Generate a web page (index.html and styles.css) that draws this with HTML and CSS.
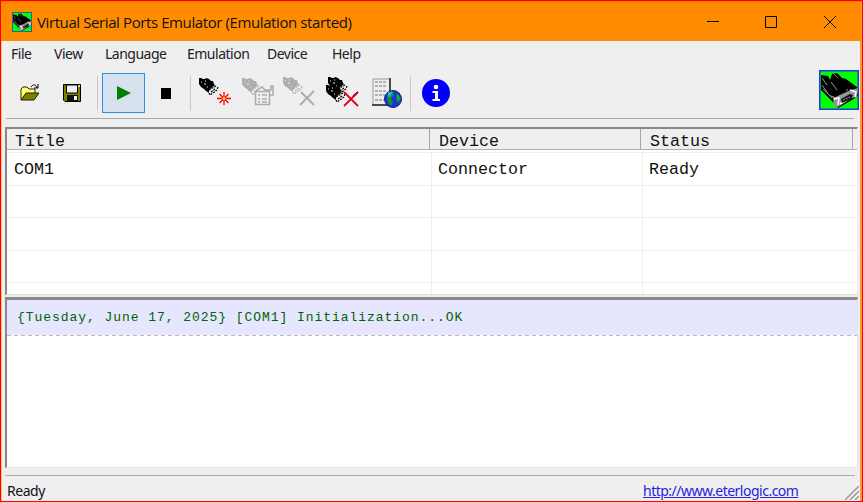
FILE: index.html
```
<!DOCTYPE html>
<html lang="en">
<head>
<meta charset="utf-8">
<title>Virtual Serial Ports Emulator</title>
<link rel="stylesheet" href="styles.css">
</head>
<body>
<svg class="defs" width="0" height="0" aria-hidden="true">
  <symbol id="plug" viewBox="0 0 20 18">
    <path fill="currentColor" d="M0 0h2l2 1h2l1-1 3 1 2 2h2l1 3 2 2 1 2-8 5-3-2-2-2-3-2-2-3z"/>
    <path fill="none" stroke="#efefef" d="M2 4h1M5 6h2M6 3h1M8 9h1"/>
    <path fill="#efefef" d="M10 12l6-5 3 2-1 3-6 5-2-1z"/>
    <path fill="none" stroke="currentColor" stroke-width="1.200" stroke-dasharray="2 1" d="M10 12l7-4M10 15l1 2 7-5 1-3M12 14l4-3"/>
  </symbol>
  <symbol id="connector" viewBox="0 0 40 40">
    <rect x=".75" y=".75" width="38.5" height="38.5" fill="#0f0" stroke="#2438df" stroke-width="1.5"/>
    <path d="M2 5l7 1 2 4 2-6 5-1 5 5 4 1 11 8 1 9-6 4-14 8-5-6L2 20z" fill="#000"/>
    <path d="M3 15l7 10 6 3M3 8l5 7M12 12l6 8" fill="none" stroke="#999" stroke-width="1"/>
    <path d="M15 4l4 4M4 19l9 9" fill="none" stroke="#888" stroke-width="1"/>
    <path d="M14 28l18-8 7-2-1 9-5 1-14 9-4-1z" fill="#969696"/>
    <path d="M15 29l5-1-1 7M31 20l6 2-1 5M21 34l7-4" fill="none" stroke="#fff" stroke-width="1.500"/>
    <path d="M22 29l9-5 3 1-2 4-9 4z" fill="#111"/>
    <path d="M24 30l7-3" stroke="#aaa" stroke-dasharray="2 1"/>
    <path d="M13 27h2M27 20h2" stroke="#bd9827"/>
  </symbol>
</svg>
<div class="window">
  <header class="titlebar">
    <svg class="app-icon" viewBox="0 0 40 40"><use href="#connector"/></svg>
    <span class="caption">Virtual Serial Ports Emulator (Emulation started)</span>
    <svg class="win-buttons" width="130" height="14" viewBox="0 0 130 14" fill="none" stroke="#000">
      <path d="M0 6.5h12M58.5 1.5h11v11h-11zM117 1l12 12M129 1l-12 12"/>
    </svg>
  </header>
  <nav class="menu">
    <span class="m-file">File</span><span class="m-view">View</span><span class="m-lang">Language</span><span class="m-emu">Emulation</span><span class="m-dev">Device</span><span class="m-help">Help</span>
  </nav>
  <div class="toolbar">
    <div class="tool open"><svg width="20" height="18" viewBox="0 0 20 18">
      <path d="M1 16V5l2-2h4l2 2h6v4" fill="#ffff70" stroke="#282800"/>
      <path d="M1 16l5-7h13l-5 7z" fill="#808000" stroke="#222200"/>
      <path d="M11 3c2-3 5-3 6 1M14 4h4V0" fill="none" stroke="#000"/>
    </svg></div>
    <div class="tool save"><svg width="18" height="18" viewBox="0 0 18 18">
      <path d="M.5.5h17v17H2l-1.500-1.500z" fill="#808000" stroke="#000"/>
      <path d="M3.500 1h11v8h-11z" fill="#efefef" stroke="#000"/><path d="M4 11h11v6H4z" fill="#111"/><path d="M11 12h3v4h-3z" fill="#efefef"/><path d="M15 1h2v2h-2z" fill="#ddd"/>
    </svg></div>
    <i class="sep first"></i>
    <div class="tool play"><svg width="14" height="14" viewBox="0 0 14 14"><path d="M0 0l14 7-14 7z" fill="#008000"/></svg></div>
    <div class="tool stop"><svg width="10" height="11"><path d="M0 0h10v11H0z"/></svg></div>
    <i class="sep second"></i>
    <svg class="tool-icon" viewBox="0 0 36 32">
      <use href="#plug" x="1" y="1" width="20" height="18"/>
      <path d="M26 15v13M19 21.500h14M21.500 17l9 9M30.500 17l-9 9" stroke="#f00" stroke-width="1.300"/><circle cx="26" cy="21.500" r="1.500" fill="#ffe600"/>
    </svg>
    <svg class="tool-icon props" viewBox="0 0 36 32">
      <use href="#plug" x="1" y="1" width="20" height="18"/>
      <path d="M14.500 14.500h14v13h-14zM17 18h2m2 0h5m-9 4h2m2 0h5m-9 3h2m2 0h5M15 14l6-4 3 3h6v-4h2v9h-3" fill="#efefef" stroke="#adadad" stroke-width="1.500"/>
    </svg>
    <svg class="tool-icon remove" viewBox="0 0 36 32">
      <use href="#plug" x="1" y="0" width="20" height="18"/>
      <path d="M19 15l13 13M32 14L18 28" stroke="#adadad" stroke-width="2"/>
    </svg>
    <svg class="tool-icon remove-all" viewBox="0 0 36 32">
      <use href="#plug" x="2" y="0" width="20" height="18"/><use href="#plug" x="0" y="8" width="20" height="18"/>
      <path d="M18 15l14 14M32 15L18 29" stroke="#e90018" stroke-width="1.800"/><path d="M27 19l5-4" stroke="#880080" stroke-width="1.500"/>
    </svg>
    <svg class="tool-icon web" viewBox="0 0 36 32">
      <path d="M3 2h17v26H3z" fill="#eee" stroke="#999"/><path d="M20 1v24M2 28h17" stroke="#222" stroke-width="1.500"/>
      <path d="M5 5h12M5 9h12M5 14h12M5 18h10M5 23h9" stroke="#777" stroke-dasharray="3 1"/>
      <circle cx="23" cy="22" r="8.500" fill="#1734d5" stroke="#141b8e"/><path d="M18 16l5-2 1 4-3 4 2 3-2 4-3-3-1-5zM27 16l4 5-2 5-3-3z" fill="#198c37"/><path d="M18 16l4-1-3 5zM27 18l2 4" fill="#28bfca" stroke="#28bfca"/>
    </svg>
    <i class="sep third"></i>
    <svg class="info" width="28" height="28" viewBox="0 0 28 28"><circle cx="14" cy="14" r="14" fill="#0000fb"/><circle cx="14" cy="8" r="2.300" fill="#fff"/><path d="M10.500 12H16v8h2v2h-7.500v-2H13v-6h-2.500z" fill="#fff"/></svg>
    <svg class="logo" viewBox="0 0 40 40"><use href="#connector"/></svg>
  </div>
  <main class="ports">
    <div class="row head"><span>Title</span><span>Device</span><span>Status</span><span></span></div>
    <div class="row"><span>COM1</span><span>Connector</span><span>Ready</span></div>
    <div class="row"><span></span><span></span><span></span></div>
    <div class="row"><span></span><span></span><span></span></div>
    <div class="row"><span></span><span></span><span></span></div>
    <div class="row last"><span></span><span></span><span></span></div>
  </main>
  <section class="log"><div class="entry">{Tuesday, June 17, 2025} [COM1] Initialization...OK</div></section>
  <footer class="status"><span class="ready">Ready</span><span class="link">http://www.eterlogic.com</span>
    <svg class="grip" width="14" height="14" viewBox="0 0 14 14" stroke="#999" stroke-width="1.500"><path d="M0 14L14 0M5 14l9-9M10 14l4-4"/></svg>
  </footer>
</div>
</body>
</html>
```
FILE: styles.css
```
* { box-sizing: border-box; }
body { margin: 0; font-family: "Noto Sans", sans-serif; color: #111; }
.defs { display: block; }
.window { width: 863px; height: 502px; border: 1px solid #f00; padding-right: 1px; background: #efefef; overflow: hidden; box-shadow: inset 1px 0 #ffc078, inset -2px 0 #ff9828; }
.titlebar { height: 40px; background: #ff8c00; display: flex; align-items: center; padding: 1px 24px 0 11px; border-top: 1px solid #ff7300; }
.app-icon { width: 20px; height: 20px; }
.caption { margin-left: 5px; font: 15px/20px "Open Sans", sans-serif; white-space: nowrap; letter-spacing: -.4px; padding-bottom: 1px; }
.win-buttons { margin-left: auto; }
.menu { height: 27px; display: flex; align-items: center; padding-left: 10px; font-size: 14px; letter-spacing: -.5px; color: #202028; padding-bottom: 3px; }
.m-file { width: 43px; } .m-view { width: 51px; } .m-lang { width: 82px; } .m-emu { width: 80px; } .m-dev { width: 65px; }
.toolbar { height: 51px; display: flex; align-items: center; margin: 0 2px 0 5px; padding: 0 0 1px 12px; background: linear-gradient(#aaa, #aaa) 0 50px / 848px 1px no-repeat; }
.tool { display: flex; align-items: center; justify-content: center; }
.open { width: 24px; }
.save { width: 18px; margin-left: 21px; }
.sep { width: 1px; height: 35px; background: #c8c8c8; }
.first { margin-left: 16px; }
.play { width: 43px; height: 40px; margin-left: 4px; background: #d6e2ed; border: 1px solid #3090dd; }
.stop { width: 10px; margin-left: 16px; }
.second { margin-left: 19px; }
.tool-icon { width: 36px; height: 32px; margin-left: 7px; color: #000; }
.props, .remove { color: #adadad; }
.props { margin-left: 7px; }
.remove { margin-left: 5px; }
.remove-all { margin-left: 8px; }
.web { margin-left: 8px; }
.third { margin-left: 4px; }
.info { margin-left: 11px; }
.logo { width: 40px; height: 40px; margin-left: auto; margin-top: -7px; }
.ports { height: 168px; width: 853px; margin: 8px 0 0 4px; background: #fff; border: solid #888; border-width: 2px 1px 1px 2px; border-right-color: #ececec; border-bottom-color: #ddd; overflow: hidden; font: 16.670px/32px "Liberation Mono", monospace; }
.row { display: grid; grid-template-columns: 425px 211px 1fr; height: 32.500px; border-bottom: 1px solid #efefef; }
.row span { padding-left: 7px; border-right: 1px solid #efefef; white-space: nowrap; padding-top: 1px; }
.row span:nth-child(2), .row span:nth-child(3) { padding-left: 6px; }
.row span:last-child { border-right: 0; }
.head { grid-template-columns: 423px 211px 212px 1fr; height: 24px; line-height: 25px; }
.head span { height: 21px; background: #efefef; border-right: 1px solid #a5a5a5; border-bottom: 1px solid #b0b0b0; padding-left: 8px; padding-top: 0; }
.head span:nth-child(2), .head span:nth-child(3) { padding-left: 9px; }
.log { width: 853px; height: 171px; margin: 2px 0 0 4px; background: #fff; border: solid #888; border-width: 3px 1px 1px 2px; border-right-color: #e3e3e3; border-bottom-color: #e3e3e3; }
.entry { height: 35px; padding-left: 10px; background: #e6e6ff; font: 13px/36px "Liberation Mono", monospace; letter-spacing: .95px; color: #006400; margin-bottom: 0; }
.entry::after { content: ""; display: block; height: 1px; margin: -1px 0 0 -10px; background: repeating-linear-gradient(90deg, #bbb 0 4px, #fff 4px 7px); }
.status { position: relative; margin: 7px 2px 0 4px; height: 25px; display: flex; background: linear-gradient(#aaa, #aaa) 0 0 / 850px 1px no-repeat; font: 14px/31px "Noto Sans", sans-serif; letter-spacing: -.45px; }
.ready { width: 638px; padding-left: 2px; }
.link { color: #2424df; text-decoration: underline; white-space: nowrap; letter-spacing: -.5px; }
.grip { margin: 11px 0 0 auto; }
```
